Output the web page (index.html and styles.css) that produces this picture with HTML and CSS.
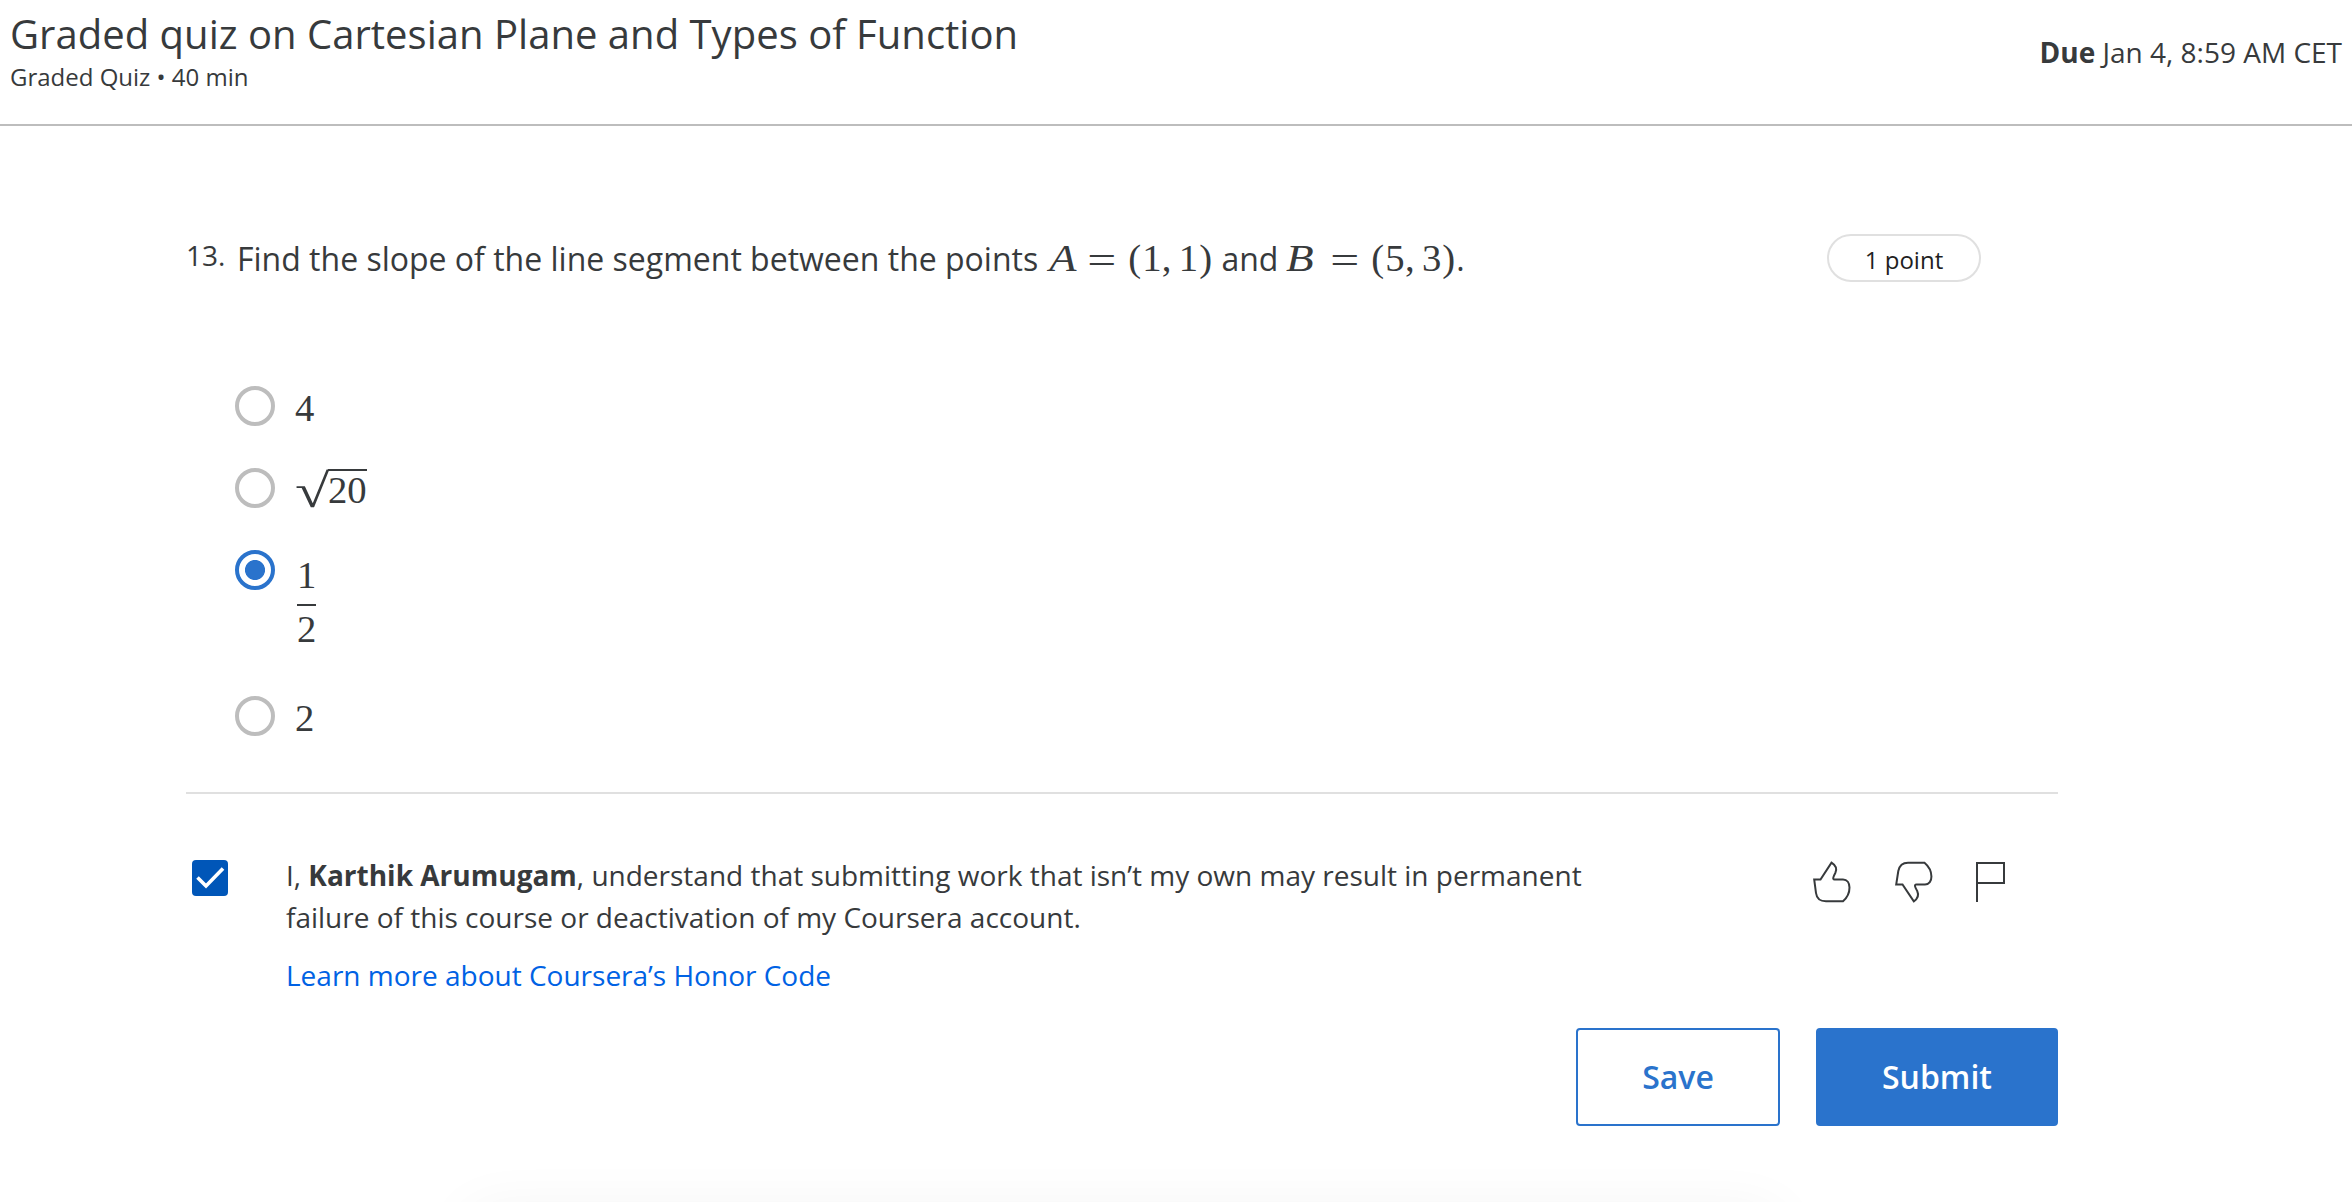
FILE: index.html
```html
<!DOCTYPE html>
<html lang="en">
<head>
<meta charset="utf-8">
<title>Graded quiz on Cartesian Plane and Types of Function</title>
<link rel="stylesheet" href="styles.css">
</head>
<body>
<div class="page">
<header class="header">
  <div class="heading">
    <h1 class="title">Graded quiz on Cartesian Plane and Types of Function</h1>
    <div class="subtitle">Graded Quiz • 40 min</div>
  </div>
  <div class="due"><b>Due</b> Jan 4, 8:59 AM CET</div>
</header>
<main class="content">
  <section class="question">
    <div class="number">13.</div>
    <div class="prompt">Find the slope of the line segment between the points <span class="math"><i class="var a">A</i><span class="eq">=</span><span class="paren">(</span><span class="digit">1</span><span class="comma">,</span><span class="digit">1</span><span class="paren">)</span></span> and <span class="math"><i class="var b">B</i><span class="eq">=</span><span class="paren">(</span><span class="digit">5</span><span class="comma">,</span><span class="digit">3</span><span class="paren">)</span></span>.</div>
    <div class="points">1 point</div>
  </section>
  <div class="options">
    <label class="option"><span class="radio"></span><span class="answer">4</span></label>
    <label class="option"><span class="radio"></span><span class="answer root"><span class="radical">√</span><span class="radicand">20</span></span></label>
    <label class="option tall"><span class="radio checked"></span><span class="fraction"><span class="numerator">1</span><span class="denominator">2</span></span></label>
    <label class="option"><span class="radio"></span><span class="answer">2</span></label>
  </div>
  <section class="honor">
    <span class="checkbox"><svg width="36" height="36" viewBox="0 0 36 36"><path d="M5.5 17.5L14 26L31 8.5" fill="none" stroke="#fff" stroke-width="3.6"/></svg></span>
    <div class="pledge">
      <p class="statement">I, <b>Karthik Arumugam</b>, understand that submitting work that isn’t my own may result in permanent<br>failure of this course or deactivation of my Coursera account.</p>
      <a class="link">Learn more about Coursera’s Honor Code</a>
    </div>
    <div class="feedback">
      <svg width="38" height="42" viewBox="0 0 38 42"><path d="M1.2 18.5H7.5L18.5 1.7C23 4.5 24.2 8 22.3 12C20.7 15 19 18.5 21.5 18.5H30C38.5 18.5 38.8 32.5 30 40.3H13C6 40.3 3.5 36 3 32Z"/></svg>
      <svg width="38" height="42" viewBox="0 0 38 42"><path d="M1.2 23.5H7.5L18.8 40.3C23 37.5 24 34 22.2 30C20.6 27 18.5 23.5 21.5 23.5H30C38.5 23.5 38.8 9.5 29.5 1.7H13C6 1.7 4 6.5 3.3 10Z"/></svg>
      <svg class="flag" width="30" height="42" viewBox="0 0 30 42"><path d="M2 41V2H29V22H2"/></svg>
    </div>
  </section>
  <div class="actions">
    <button class="button save">Save</button>
    <button class="button submit">Submit</button>
  </div>
</main>
<div class="bottom-shadow"></div>
</div>
</body>
</html>
```

FILE: styles.css
```css
* { box-sizing: border-box; }
body {
  margin: 0;
  background: #fff;
  color: #373a3c;
  font-family: "Open Sans", sans-serif;
  font-size: 28px;
}
.page { position: relative; height: 1202px; overflow: hidden; }
.header {
  display: flex;
  justify-content: space-between;
  height: 126px;
  padding: 7px 10px 0;
  border-bottom: 2px solid #bdbdbd;
}
.title { margin: 0; font-size: 40px; font-weight: 400; line-height: 54px; letter-spacing: 0.02px; }
.subtitle { font-size: 24px; line-height: 32px; }
.due { padding-top: 26px; line-height: 38px; }
.content { width: 1872px; margin-left: 186px; }
.question { display: flex; height: 260px; padding-top: 108px; }
.number { width: 51px; padding-top: 2px; line-height: 38px; }
.prompt { flex: 1; padding-top: 3px; font-size: 32px; line-height: 44px; white-space: nowrap; }
.math { font-family: "Liberation Serif", serif; font-size: 38.7px; line-height: 1px; white-space: nowrap; }
.math > * { display: inline-block; text-align: center; }
.var { transform-origin: 0 50%; }
.a { width: 31px; margin-left: -2px; transform: scaleX(1.15); }
.b { width: 36px; margin-left: -4px; text-align: left; transform: translateX(3px) scaleX(1.17); }
.eq { width: 51.6px; transform: translateY(2px) scaleX(1.33); }
.paren { width: 15px; }
.digit { width: 19.4px; }
.comma { width: 17.2px; padding-right: 7px; }
.points {
  width: 154px;
  height: 48px;
  margin-right: 77px;
  border: 2px solid #e0e0e0;
  border-radius: 24px;
  color: #1f1f1f;
  font-size: 24px;
  line-height: 48px;
  text-align: center;
}
.options { height: 408px; padding-left: 49px; border-bottom: 2px solid #e0e0e0; }
.option { display: flex; gap: 20px; height: 82px; }
.tall { height: 146px; }
.radio { width: 40px; height: 40px; border: 4px solid #bdbdbd; border-radius: 50%; }
.checked { border-color: #2a73cc; background: radial-gradient(circle, #2a73cc 9.6px, #fff 10.4px); }
.answer { font: 38.7px/44px "Liberation Serif", serif; }
.root { display: flex; }
.radical { width: 33px; height: 44px; margin-top: 6px; transform: scale(1.62, 1.22); transform-origin: 0 100%; }
.radicand { height: 36px; margin-top: 1px; border-top: 2px solid #373a3c; line-height: 38px; }
.fraction {
  display: flex;
  flex-direction: column;
  width: 19px;
  margin: 3px 0 0 2px;
  font: 38.7px/44px "Liberation Serif", serif;
}
.numerator { height: 53px; border-bottom: 2px solid #373a3c; }
.denominator { padding-top: 1px; }
.honor { display: flex; height: 234px; padding: 66px 0 0 6px; }
.checkbox { width: 36px; height: 36px; border-radius: 4px; background: #0056b8; }
.checkbox svg { display: block; }
.pledge { width: 1527px; padding-left: 58px; margin-top: -6px; }
.statement { margin: 0 0 16px; line-height: 42px; white-space: nowrap; }
.link { color: #0062e4; line-height: 42px; }
.feedback { display: flex; gap: 44px; margin: 1px 0 0 58px; }
.feedback svg { fill: none; stroke: #373a3c; stroke-width: 2; }
.feedback .flag { margin-left: -2px; }
.actions { display: flex; justify-content: flex-end; gap: 36px; }
.button {
  height: 98px;
  padding: 0;
  border: 2px solid #2a73cc;
  border-radius: 4px;
  font: 600 32px/94px "Open Sans", sans-serif;
}
.save { width: 204px; background: #fff; color: #2a73cc; }
.submit { width: 242px; background: #2a73cc; color: #fff; }
.bottom-shadow {
  position: absolute;
  left: 470px;
  top: 1212px;
  width: 1306px;
  height: 80px;
  box-shadow: 0 0 60px rgba(0, 0, 0, .055);
}
```
